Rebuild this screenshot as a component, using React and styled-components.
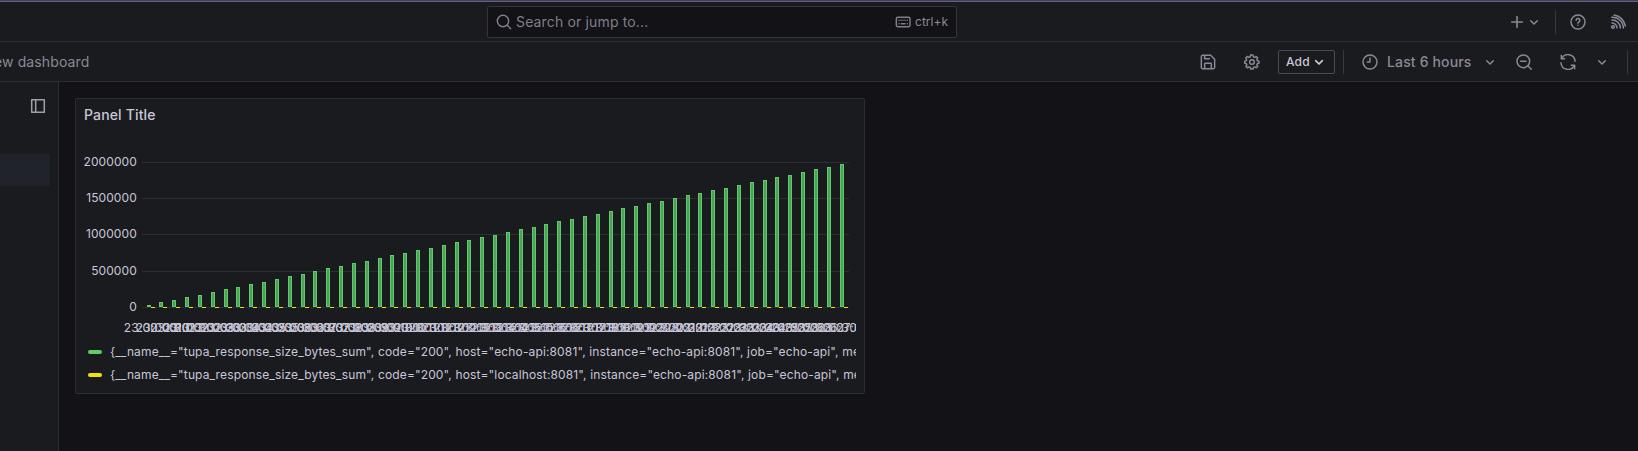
import React from "react";
import styled, { createGlobalStyle } from "styled-components";

const Global = createGlobalStyle`
  * { box-sizing: border-box; }
  body { margin: 0; background: #121217; color: #c9c6d8; font-family: Inter, sans-serif; font-size: 14px; letter-spacing: 0.15px; overflow: hidden; }
`;
const line = "#2d2e33";
const muted = "#8b8995";

const Page = styled.div`height: 451px; display: flex; flex-direction: column; background: #121217; overflow: hidden;`;
const Accent = styled.div`height: 2px; flex: none; background: #403e58; border-bottom: 1px solid #64617d;`;
const Bar = styled.header`
  height: 40px; flex: none; display: flex; align-items: center; background: #1a1b1f;
  border-bottom: 1px solid ${line}; color: ${muted};
`;
const Side = styled.div`flex: 1; display: flex; align-items: center; justify-content: flex-end; padding-right: ${p => p.$right || 0}px;`;
const Search = styled.div`
  width: 470px; height: 32px; margin-left: 487px; padding: 0 8px; display: flex; align-items: center;
  background: #121217; border: 1px solid #34353a; border-radius: 2px; color: #807e8a;
`;
const SearchText = styled.span`flex: 1; margin-left: 4px; letter-spacing: 0.15px;`;
const Keys = styled.span`font-size: 12px; margin-left: 4px; color: ${muted}; letter-spacing: 0;`;
const Icon = styled.svg`
  flex: none; display: block; width: ${p => p.$size || 16}px; height: ${p => p.$size || 16}px;
  margin-left: ${p => p.$left || 0}px; fill: none; stroke: currentColor;
  stroke-width: ${p => p.$stroke || 2.2}; stroke-linecap: round; stroke-linejoin: round;
`;
const Divider = styled.i`flex: none; width: 1px; height: 24px; background: #38393e; margin-left: ${p => p.$left || 0}px;`;
const Crumb = styled.span`margin-left: -6px; white-space: nowrap; letter-spacing: 0.12px;`;
const AddButton = styled.button`
  width: 57px; height: 24px; margin-left: 18px; padding: 0 0 0 7px; display: flex; align-items: center;
  font: 500 12px Inter, sans-serif; letter-spacing: 0.15px; color: #c9c6d8; background: transparent;
  border: 1px solid #4a4b52; border-radius: 2px;
`;
const Range = styled.span`margin-left: 9px; font-weight: 500; width: 85px; white-space: nowrap;`;

const Body = styled.main`flex: 1; display: flex; min-height: 0;`;
const Sidebar = styled.aside`width: 59px; flex: none; background: #1a1b1f; border-right: 1px solid ${line}; color: #a09eae; padding-top: 16px;`;
const ActiveItem = styled.div`width: 50px; height: 32px; margin-top: 40px; background: #20232a; border-radius: 0 2px 2px 0;`;
const Canvas = styled.section`padding: 16px;`;
const Panel = styled.article`
  width: 790px; height: 296px; padding: 0 8px; background: #1a1b1f; border: 1px solid ${line};
  border-radius: 2px; display: flex; flex-direction: column;
`;
const Title = styled.h2`margin: 0; height: 32px; line-height: 32px; font-size: 14px; font-weight: 500; letter-spacing: 0.15px;`;
const Chart = styled.svg`
  display: block; width: 772px; height: 209px; flex: none; overflow: hidden;
  font-family: Inter, sans-serif; font-size: 12px; letter-spacing: 0.07px;
`;
const TimeLabel = styled.text`fill: #c9c6d8; letter-spacing: 0.2px; text-anchor: middle;`;
const LegendRow = styled.div`
  height: 23px; flex: none; display: flex; align-items: center; padding-left: 4px; font-size: 12px;
  letter-spacing: 0.14px; white-space: nowrap; overflow: hidden;
`;
const Swatch = styled.i`width: 14px; height: 4px; margin: 1px 8px 0 0; border-radius: 2px; background: ${p => p.$color}; flex: none;`;

const Chevron = ({ left, size = 16, stroke }) => (
  <Icon $left={left} $size={size} $stroke={stroke} viewBox="0 0 24 24"><path d="m7 10 5 5 5-5" /></Icon>
);

const bars = Array.from({ length: 55 }, (_, i) => ({
  x: 63 + Math.floor(i * 12.834),
  y: Math.round(174 - i * 2.61),
  time: `23:${String(i >> 1).padStart(2, "0")}:${i % 2 ? "30" : "00"}`,
}));
const ticks = [[2000000, 31], [1500000, 67], [1000000, 103], [500000, 140], [0, 176]];

function BarChart() {
  return (
    <Chart viewBox="0 0 772 209">
      {ticks.map(([v, y]) => (
        <g key={v}>
          <rect x="58" y={y} width="707" height="1" fill="#2d2e33" />
          <text x="52.8" y={y + 4} textAnchor="end" fill="#c9c6d8">{v}</text>
        </g>
      ))}
      {bars.map(b => (
        <g key={b.x}>
          <rect x={b.x + 0.5} y={b.y + 0.5} width="3" height={175 - b.y} fill="#4ba357" stroke="#5fcb6b" />
          <rect x={b.x + 4} y="176" width="4" height="1" fill="#f2e00b" />
          <TimeLabel x={b.x + 3.5} y="201">{b.time}</TimeLabel>
        </g>
      ))}
    </Chart>
  );
}

const legend = [["#5fcb6b", "echo-api"], ["#f2e00b", "localhost"]];

export default function App() {
  return (
    <Page>
      <Global />
      <Accent />
      <Bar>
        <Search>
          <Icon viewBox="0 0 24 24"><circle cx="10.5" cy="10.5" r="8.5" /><path d="m17 17 5 5" /></Icon>
          <SearchText>Search or jump to...</SearchText>
          <Icon viewBox="0 0 24 24"><rect x="2" y="5" width="20.5" height="14" rx="2" /><path d="M6 9.5h.1M9 9.5h.1M12 9.5h.1M15 9.5h.1M18.5 9.5h.1M6 14.5h.1M9.5 14.5h5.5M18.5 14.5h.1" /></Icon>
          <Keys>ctrl+k</Keys>
        </Search>
        <Side $right={12}>
          <Icon viewBox="0 0 24 24" $stroke={2.4}><path d="M12 4v16M4 12h16" /></Icon>
          <Chevron left={1} />
          <Divider $left={13} />
          <Icon $left={14} viewBox="0 0 24 24"><circle cx="12" cy="12" r="10.5" /><path d="M9.2 9.5a2.8 2.8 0 1 1 4.2 2.4c-1 .6-1.4 1-1.4 1.8M12 17h.01" /></Icon>
          <Icon $left={24} viewBox="0 0 24 24"><circle cx="4.5" cy="19.5" r="2" /><path d="M3 13.5a7.5 7.5 0 0 1 7.5 7.5M3 9a12 12 0 0 1 12.5 12M3 5a16 16 0 0 1 17 16M6 1.5A20 20 0 0 1 23 18" /></Icon>
        </Side>
      </Bar>
      <Bar>
        <Crumb>ew dashboard</Crumb>
        <Side $right={10}>
          <Icon viewBox="0 0 24 24"><path d="M2 4a2 2 0 0 1 2-2h12l6 6v12a2 2 0 0 1-2 2H4a2 2 0 0 1-2-2zM7 2v5h7M7 22v-7a1 1 0 0 1 1-1h8a1 1 0 0 1 1 1v7" /></Icon>
          <Icon $left={28} viewBox="0 0 24 24"><circle cx="12" cy="12" r="3.5" /><path d="m9.8 1.5-.5 2.7-2.2.9-2.3-1.5-2.2 2.3L4 8.2l-.8 2.1-2.1.4v3.2l2.3.5.9 2-1.4 2.2 2.3 2.2 2.2-1.4 2.1.9.5 2.2h3.6l.6-2.4 2-.8 2.3 1.5 2.2-2.3-1.5-2.2.9-2 2.4-.5v-3.1l-2.5-.6-.8-2 1.4-2.2-2.2-2.3-2.3 1.5-2.1-.9-.6-2.7z" /></Icon>
          <AddButton>Add<Chevron left={1} stroke={2.6} /></AddButton>
          <Divider $left={8} />
          <Icon $left={18} viewBox="0 0 24 24"><circle cx="12" cy="12" r="10.5" /><path d="M12 6v6H8" /></Icon>
          <Range>Last 6 hours</Range>
          <Chevron left={10} />
          <Icon $left={18} viewBox="0 0 24 24"><circle cx="11" cy="11" r="9.5" /><path d="m18 18 5 5M7 11h8" /></Icon>
          <Icon $left={28} viewBox="0 0 24 24"><path d="M2 2v5h5M2.5 7A10.5 10.5 0 0 1 22.5 11M22 22v-5h-5M21.5 17A10.5 10.5 0 0 1 1.5 13" /></Icon>
          <Chevron left={18} />
          <Divider $left={17} />
        </Side>
      </Bar>
      <Body>
        <Sidebar>
          <Icon $left={30} viewBox="0 0 16 16" $stroke={1.5}><path d="M1.7 1.7h12.6v12.6H1.7zM5.7 2v12" /></Icon>
          <ActiveItem />
        </Sidebar>
        <Canvas>
          <Panel>
            <Title>Panel Title</Title>
            <BarChart />
            {legend.map(([color, host]) => (
              <LegendRow key={host}>
                <Swatch $color={color} />
                {`{__name__="tupa_response_size_bytes_sum", code="200", host="${host}:8081", instance="echo-api:8081", job="echo-api", method="GET"}`}
              </LegendRow>
            ))}
          </Panel>
        </Canvas>
      </Body>
    </Page>
  );
}
